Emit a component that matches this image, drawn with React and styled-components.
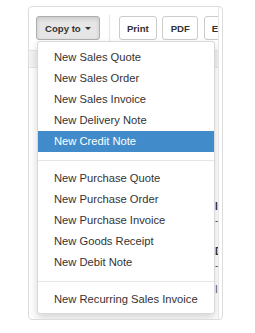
import React from "react"
import styled, { createGlobalStyle } from "styled-components"

const GlobalStyle = createGlobalStyle`
  html, body {
    margin: 0;
    padding: 0;
    background: #fff;
  }
  body {
    font-family: "Liberation Sans", Arial, Helvetica, sans-serif;
    color: #333;
  }
`

const menuGroups = [
  [
    "New Sales Quote",
    "New Sales Order",
    "New Sales Invoice",
    "New Delivery Note",
    "New Credit Note",
  ],
  [
    "New Purchase Quote",
    "New Purchase Order",
    "New Purchase Invoice",
    "New Goods Receipt",
    "New Debit Note",
  ],
  ["New Recurring Sales Invoice"],
]

const activeItem = "New Credit Note"

// rows of the list that sits under the open menu, only their edge shows
const rows = [
  { name: "", sub: "", height: 125 },
  { name: "Invoice", sub: "-(0.00)", height: 45 },
  { name: "Don", sub: "-(0.00)", height: 38 },
  { name: "", sub: "I", height: 30 },
]

function App() {
  return (
    <>
      <GlobalStyle />
      <Panel>
        <Viewport>
          <Toolbar>
            <Dropdown>
              <Button active>
                Copy to <Caret />
              </Button>
              <Menu>
                {menuGroups.map((group, i) => (
                  <React.Fragment key={i}>
                    {i > 0 && <Divider />}
                    {group.map((label) => (
                      <MenuItem key={label} active={label === activeItem}>
                        {label}
                      </MenuItem>
                    ))}
                  </React.Fragment>
                ))}
              </Menu>
            </Dropdown>
            <Separator />
            <Buttons>
              <Button>Print</Button>
              <Button>PDF</Button>
              <Button>Email</Button>
            </Buttons>
          </Toolbar>
          <HeaderRow />
          {rows.map((row, i) => (
            <Row key={i} height={row.height}>
              <span />
              <Cell>
                <Name>{row.name}</Name>
                <Sub>{row.sub}</Sub>
              </Cell>
            </Row>
          ))}
        </Viewport>
      </Panel>
    </>
  )
}

export default App

const Panel = styled.div`
  margin: 6px 0 0 28px;
  width: 195px;
  height: 314px;
  box-sizing: border-box;
  border: 1px solid #dcdcdc;
  border-radius: 4px;
  padding-right: 3px;
  display: flex;
  background: #fff;
`

const Viewport = styled.div`
  flex: 1;
  overflow: hidden;
  border-right: 1px solid #e6e6e6;
`

const Toolbar = styled.div`
  display: flex;
  align-items: center;
  padding: 9px 0 10px 7px;
  border-bottom: 1px solid #e5e5e5;
  white-space: nowrap;
`

const Dropdown = styled.div`
  position: relative;
  flex-shrink: 0;
`

const Buttons = styled.div`
  display: flex;
  gap: 5.5px;
  flex-shrink: 0;
`

const Button = styled.button`
  display: flex;
  align-items: center;
  height: 24px;
  box-sizing: border-box;
  padding: ${(p) => (p.active ? "0 8px 0 8px" : "0 7.2px")};
  font-family: "Liberation Sans", Arial, Helvetica, sans-serif;
  font-size: 9.6px;
  font-weight: 700;
  color: #333;
  background: ${(p) => (p.active ? "#e6e6e6" : "#fff")};
  border: 1px solid ${(p) => (p.active ? "#adadad" : "#ccc")};
  border-radius: 3px;
  box-shadow: ${(p) =>
    p.active ? "inset 0 2px 4px rgba(0, 0, 0, 0.125)" : "none"};
  flex-shrink: 0;
`

const Caret = styled.span`
  display: inline-block;
  margin-left: 4px;
  width: 0;
  height: 0;
  border-top: 3px solid #333;
  border-left: 3px solid transparent;
  border-right: 3px solid transparent;
`

const Separator = styled.div`
  align-self: stretch;
  width: 1px;
  margin: -1px 9px;
  background: #e5e5e5;
  flex-shrink: 0;
`

const Menu = styled.div`
  position: absolute;
  top: 100%;
  left: 1px;
  margin-top: 1px;
  width: 178px;
  box-sizing: border-box;
  padding: 5px 0 3px;
  background: #fff;
  border: 1px solid rgba(0, 0, 0, 0.15);
  border-radius: 3px;
  box-shadow: 0 4px 9px rgba(0, 0, 0, 0.17);
  z-index: 10;
`

const MenuItem = styled.div`
  padding: 0 16px;
  line-height: 21px;
  font-size: 11.2px;
  white-space: nowrap;
  color: ${(p) => (p.active ? "#fff" : "#333")};
  background: ${(p) => (p.active ? "#428bca" : "transparent")};
`

const Divider = styled.div`
  height: 1px;
  margin: 8px 0 7px;
  background: #e5e5e5;
`

const HeaderRow = styled.div`
  height: 16px;
  background: #f3f3f3;
  border-bottom: 1px solid #e5e5e5;
`

const Row = styled.div`
  display: grid;
  grid-template-columns: 186px 1fr;
  height: ${(p) => p.height}px;
  box-sizing: border-box;
  padding-top: 7px;
  font-size: 10px;
  white-space: nowrap;
`

const Cell = styled.div`
  display: flex;
  flex-direction: column;
`

const Name = styled.span`
  font-weight: 700;
  line-height: 14px;
  color: #333;
`

const Sub = styled.span`
  line-height: 13px;
  color: #555;
`
